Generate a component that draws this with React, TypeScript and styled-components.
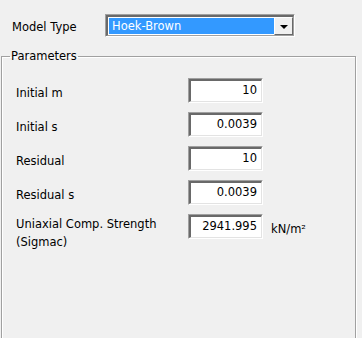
import React from 'react'
import styled, { createGlobalStyle } from 'styled-components'

const GlobalStyle = createGlobalStyle`
    html, body {
        margin: 0;
        padding: 0;
        background: #f0f0f0;
        overflow: hidden;
    }
    body {
        font-family: "DejaVu Sans", Tahoma, sans-serif;
        font-size: 11.5px;
        color: #000;
    }
`

const Page = styled.div`
    width: 362px;
    height: 338px;
    background: #f0f0f0;
    padding-top: 14px;
    box-sizing: border-box;
    overflow: hidden;
`

const TopRow = styled.div`
    display: flex;
    align-items: center;
    height: 23px;
    padding-left: 12px;
`

const TopLabel = styled.span`
    width: 93px;
    padding-top: 3px;
    font-size: 11.5px;
`

const Combo = styled.div`
    display: flex;
    width: 190px;
    height: 23px;
    box-sizing: border-box;
    border-top: 1px solid #a0a0a0;
    border-left: 1px solid #a0a0a0;
    border-right: 1px solid #ffffff;
    border-bottom: 1px solid #ffffff;
`

const ComboInner = styled.div`
    display: flex;
    flex: 1;
    border-top: 2px solid #696969;
    border-left: 2px solid #696969;
    border-right: 1px solid #a0a0a0;
    border-bottom: 1px solid #a0a0a0;
    background: #ffffff;
`

const ComboValue = styled.div`
    flex: 1;
    margin: 1px 0 1px 1px;
    background: #3399ff;
    color: #ffffff;
    font-size: 11.5px;
    line-height: 17px;
    padding-left: 3px;
`

const ComboButton = styled.div`
    width: 19px;
    box-sizing: border-box;
    background: #f0f0f0;
    border-top: 1px solid #ffffff;
    border-left: 1px solid #ffffff;
    border-right: 1px solid #696969;
    border-bottom: 1px solid #696969;
    display: flex;
    align-items: center;
    justify-content: center;

    &::after {
        content: '';
        width: 0;
        height: 0;
        border-left: 4px solid transparent;
        border-right: 4px solid transparent;
        border-top: 4px solid #000;
        margin-top: 1px;
    }
`

const Group = styled.fieldset`
    margin: 12px 0 0 1px;
    width: 355px;
    height: 320px;
    box-sizing: border-box;
    padding: 0 0 0 14px;
    border: 1px solid #a0a0a0;
    box-shadow: inset 1px 1px 0 #ffffff, 1px 1px 0 #ffffff;
`

const Legend = styled.legend`
    margin-left: -6px;
    padding: 0 1px;
    font-size: 11.5px;
    line-height: 14px;
`

const Rows = styled.div`
    display: flex;
    flex-direction: column;
    gap: 9px;
    padding-top: 15px;
`

const Row = styled.div`
    display: grid;
    grid-template-columns: 172px 75px auto;
    align-items: start;
`

const Label = styled.div<{ $tall?: boolean }>`
    font-size: 11.5px;
    line-height: ${({ $tall }) => ($tall ? '18px' : '14px')};
    padding-top: ${({ $tall }) => ($tall ? '1px' : '8px')};
`

const Field = styled.div`
    height: 25px;
    box-sizing: border-box;
    border-top: 1px solid #a0a0a0;
    border-left: 1px solid #a0a0a0;
    border-right: 1px solid #ffffff;
    border-bottom: 1px solid #ffffff;
`

const FieldInner = styled.div`
    height: 100%;
    box-sizing: border-box;
    border-top: 2px solid #696969;
    border-left: 2px solid #696969;
    border-right: 1px solid #e3e3e3;
    border-bottom: 1px solid #e3e3e3;
    background: #ffffff;
    text-align: right;
    padding-right: 4px;
    font-size: 11.5px;
    line-height: 18px;
`

const Unit = styled.div`
    font-size: 11.5px;
    line-height: 14px;
    padding: 8px 0 0 8px;
`

const params = [
    { label: 'Initial m', value: '10' },
    { label: 'Initial s', value: '0.0039' },
    { label: 'Residual', value: '10' },
    { label: 'Residual s', value: '0.0039' },
]

const App = () => {
    return (
        <Page>
            <GlobalStyle />
            <TopRow>
                <TopLabel>Model Type</TopLabel>
                <Combo>
                    <ComboInner>
                        <ComboValue>Hoek-Brown</ComboValue>
                        <ComboButton />
                    </ComboInner>
                </Combo>
            </TopRow>
            <Group>
                <Legend>Parameters</Legend>
                <Rows>
                    {params.map((p) => (
                        <Row key={p.label}>
                            <Label>{p.label}</Label>
                            <Field>
                                <FieldInner>{p.value}</FieldInner>
                            </Field>
                        </Row>
                    ))}
                    <Row>
                        <Label $tall>
                            Uniaxial Comp. Strength
                            <br />
                            (Sigmac)
                        </Label>
                        <Field>
                            <FieldInner>2941.995</FieldInner>
                        </Field>
                        <Unit>kN/m²</Unit>
                    </Row>
                </Rows>
            </Group>
        </Page>
    )
}

export default App
